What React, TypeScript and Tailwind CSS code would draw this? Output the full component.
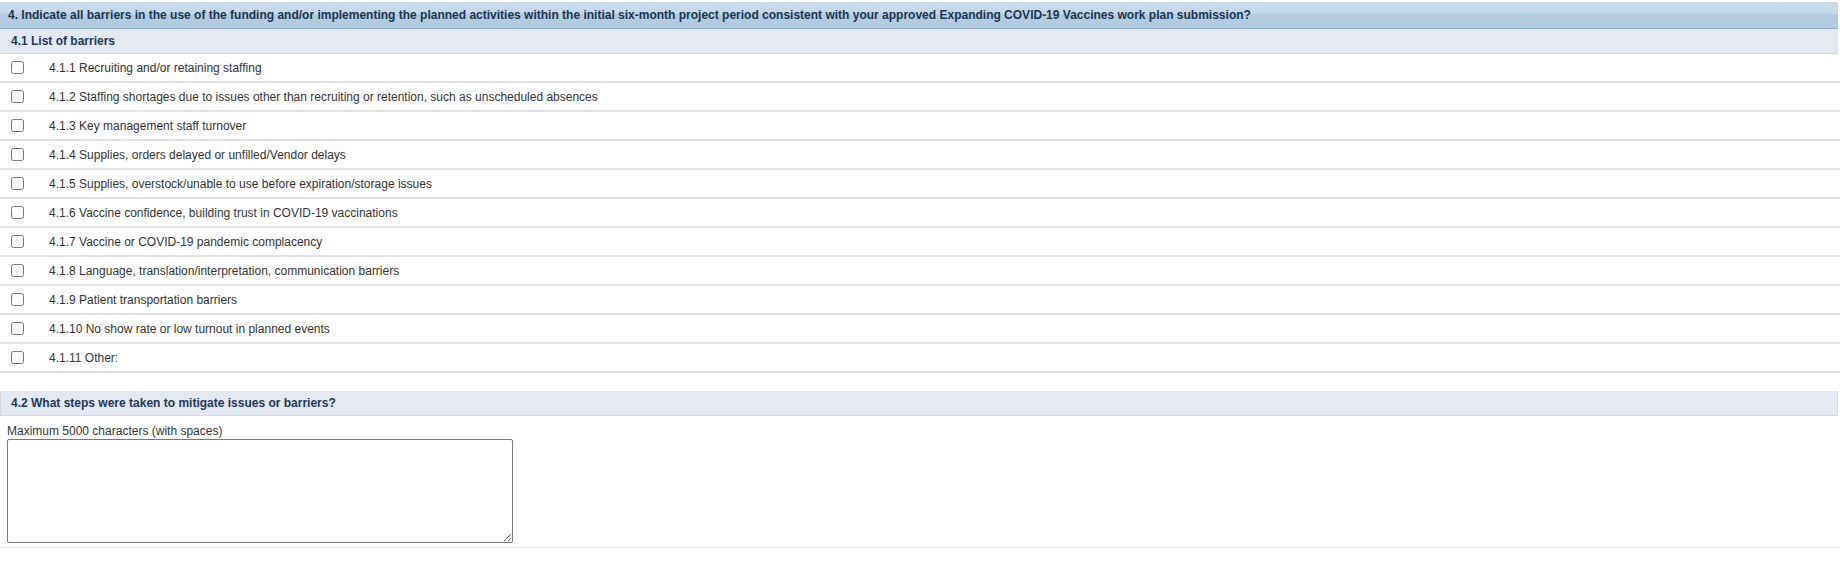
import { useState } from 'react';

const barriers = [
  '4.1.1 Recruiting and/or retaining staffing',
  '4.1.2 Staffing shortages due to issues other than recruiting or retention, such as unscheduled absences',
  '4.1.3 Key management staff turnover',
  '4.1.4 Supplies, orders delayed or unfilled/Vendor delays',
  '4.1.5 Supplies, overstock/unable to use before expiration/storage issues',
  '4.1.6 Vaccine confidence, building trust in COVID-19 vaccinations',
  '4.1.7 Vaccine or COVID-19 pandemic complacency',
  '4.1.8 Language, translation/interpretation, communication barriers',
  '4.1.9 Patient transportation barriers',
  '4.1.10 No show rate or low turnout in planned events',
  '4.1.11 Other:',
];

export default function App() {
  const [checked, setChecked] = useState<boolean[]>(barriers.map(() => false));
  const [steps, setSteps] = useState('');

  return (
    <div className="w-full bg-white pt-[2px] font-['Liberation_Sans',Arial,sans-serif] text-[12px] text-[#333333]">
      <div className="mr-[2px] flex h-[27px] items-center border-b border-[#91abc3] bg-[linear-gradient(to_bottom,#c8dcec_0%,#c3d8ea_45%,#b2cce2_46%,#b0cbe1_100%)] px-[8px] font-bold text-[#1a3452]">
        4. Indicate all barriers in the use of the funding and/or implementing the planned activities within the initial six-month project period consistent with your approved Expanding COVID-19 Vaccines work plan submission?
      </div>

      <div className="mr-[2px] flex h-[25px] items-center border-x border-b border-x-[#dfe3ea] border-b-[#d3d8e0] bg-[#e4e8f0] px-[10px] font-bold text-[#1c395b]">
        4.1 List of barriers
      </div>

      <div>
        {barriers.map((label, i) => (
          <label
            key={label}
            className="flex h-[29px] items-center border-b-2 border-[#e4e4e4]"
          >
            <input
              type="checkbox"
              className="m-0 ml-[11px] h-[13px] w-[13px]"
              checked={checked[i]}
              onChange={() =>
                setChecked((prev) => prev.map((c, j) => (j === i ? !c : c)))
              }
            />
            <span className="ml-[25px]">{label}</span>
          </label>
        ))}
      </div>

      <div className="mt-[18px] mr-[2px] flex h-[25px] items-center border-x border-b border-x-[#d3d8e0] border-b-[#d3d8e0] bg-[#e4e8f0] px-[10px] font-bold text-[#1c395b]">
        4.2 What steps were taken to mitigate issues or barriers?
      </div>

      <div className="border-b border-[#e6e6e6] px-[7px] pt-[8px] pb-[4px]">
        <div className="leading-[14px]">Maximum 5000 characters (with spaces)</div>
        <textarea
          className="mt-[1px] block h-[104px] w-[506px] rounded-[2px] border border-[#767676] bg-white p-[2px] text-[13px]"
          maxLength={5000}
          value={steps}
          onChange={(e) => setSteps(e.target.value)}
        />
      </div>
    </div>
  );
}
